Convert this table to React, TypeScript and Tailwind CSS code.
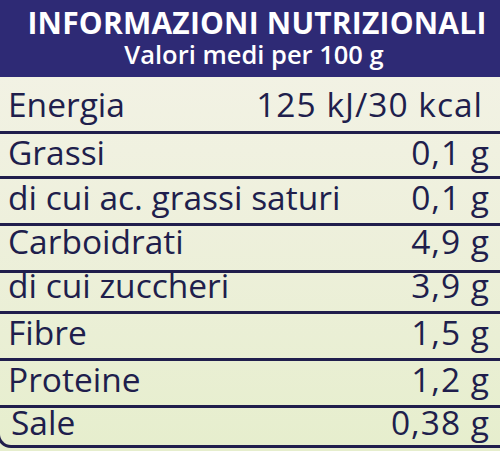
import React from 'react';

const rows = [
  { label: 'Energia', value: '125 kJ/30 kcal', cls: 'h-[57px] pb-[10px]', vcls: 'mr-[7px]' },
  { label: 'Grassi', value: '0,1 g', cls: 'h-[45px] pb-[7px]', vcls: '' },
  { label: 'di cui ac. grassi saturi', value: '0,1 g', cls: 'h-[47px] pb-[9px]', vcls: '' },
  { label: 'Carboidrati', value: '4,9 g', cls: 'h-[47px] pb-[12px]', vcls: '' },
  { label: 'di cui zuccheri', value: '3,9 g', cls: 'h-[41px] pb-[9px]', vcls: '' },
  { label: 'Fibre', value: '1,5 g', cls: 'h-[47px] pb-[9px]', vcls: '' },
  { label: 'Proteine', value: '1,2 g', cls: 'h-[47px] pb-[9px]', vcls: '' },
];

export default function App() {
  return (
    <div
      className="w-[500px] h-[451px] overflow-hidden bg-gradient-to-b from-[#f4f3e8] via-[#eef0dc] to-[#e6eecd] text-[#201e4c]"
      style={{ fontFamily: '"Open Sans", "Noto Sans", sans-serif' }}
    >
      {/* Header */}
      <div className="h-[77px] bg-[#2e2a75] text-white text-center flex flex-col items-center pt-[8px] pl-[14px]">
        <div className="text-[30px] font-bold leading-none tracking-[0.2px]">INFORMAZIONI NUTRIZIONALI</div>
        <div className="text-[25.5px] font-semibold leading-none mt-[4px] mr-[6px]">Valori medi per 100 g</div>
      </div>

      {/* Table */}
      <div>
        {rows.map((row) => (
          <div
            key={row.label}
            className={`${row.cls} flex items-end justify-between border-b-[3px] border-[#201e4c] pl-[8px] pr-[10px] text-[33.5px] font-medium leading-none`}
          >
            <span>{row.label}</span>
            <span className={`tracking-[1px] ${row.vcls}`}>{row.value}</span>
          </div>
        ))}
        <div className="h-[40px] pb-[6px] ml-[-3px] flex items-end justify-between border-b-[3px] border-l-[3px] border-[#201e4c] rounded-bl-[14px] pl-[11px] pr-[10px] text-[33.5px] font-medium leading-none">
          <span>Sale</span>
          <span className="tracking-[1px]">0,38 g</span>
        </div>
      </div>
    </div>
  );
}
